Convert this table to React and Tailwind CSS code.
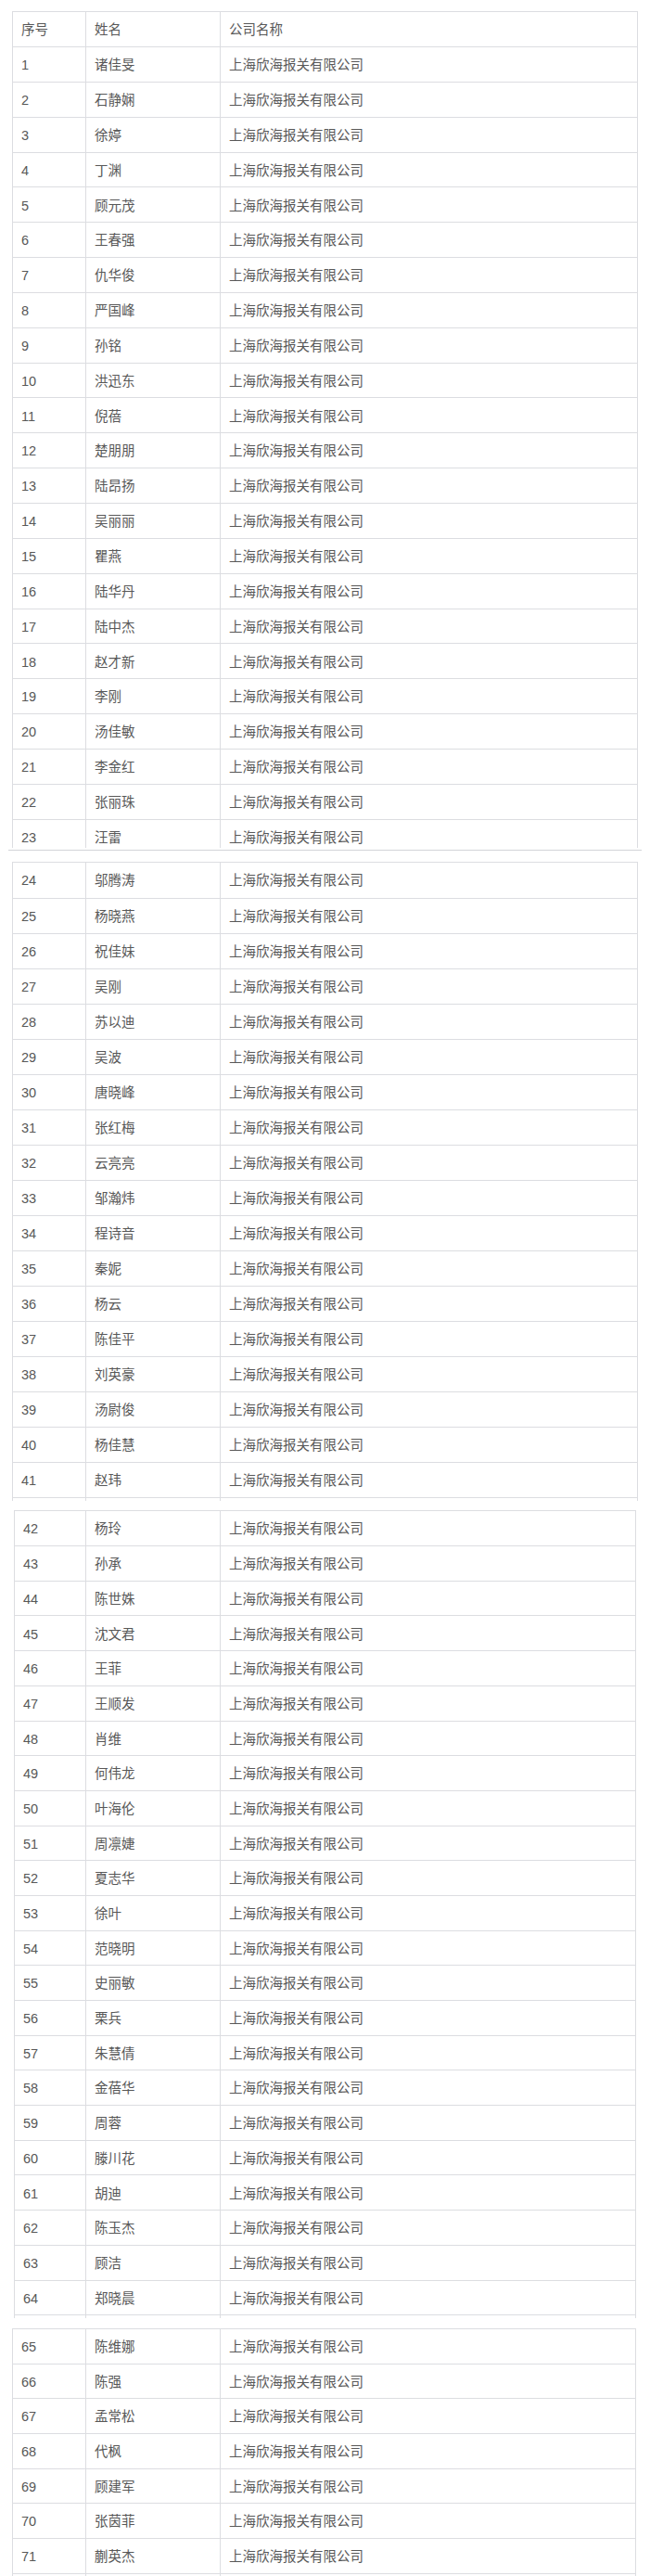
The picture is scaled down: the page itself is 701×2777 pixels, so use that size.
const COMPANY = "上海欣海报关有限公司";

const NAMES = [
  "诸佳旻", "石静娴", "徐婷", "丁渊", "顾元茂", "王春强", "仇华俊", "严国峰", "孙铭", "洪迅东",
  "倪蓓", "楚朋朋", "陆昂扬", "吴丽丽", "瞿燕", "陆华丹", "陆中杰", "赵才新", "李刚", "汤佳敏",
  "李金红", "张丽珠", "汪雷", "邬腾涛", "杨晓燕", "祝佳妹", "吴刚", "苏以迪", "吴波", "唐晓峰",
  "张红梅", "云亮亮", "邹瀚炜", "程诗音", "秦妮", "杨云", "陈佳平", "刘英豪", "汤尉俊", "杨佳慧",
  "赵玮", "杨玲", "孙承", "陈世姝", "沈文君", "王菲", "王顺发", "肖维", "何伟龙", "叶海伦",
  "周凛婕", "夏志华", "徐叶", "范晓明", "史丽敏", "栗兵", "朱慧倩", "金蓓华", "周蓉", "滕川花",
  "胡迪", "陈玉杰", "顾洁", "郑晓晨", "陈维娜", "陈强", "孟常松", "代枫", "顾建军", "张茵菲",
  "蒯英杰",
];

const people = (from, to) =>
  NAMES.slice(from - 1, to).map((name, i) => ({ no: from + i, name }));

function Row({ no, name, company, height, col1 }) {
  return (
    <div className={`flex border-b border-[#dcdde1] ${height}`}>
      <div className={`${col1} shrink-0 border-r border-[#dcdde1] pl-[9px] pt-[2px] flex items-center`}>
        {no}
      </div>
      <div className="w-[145px] shrink-0 border-r border-[#dcdde1] pl-[9px] pt-[2px] flex items-center">
        {name}
      </div>
      <div className="flex-1 pl-[9px] pt-[2px] flex items-center">{company}</div>
    </div>
  );
}

export default function App() {
  return (
    <div
      className="h-[2777px] overflow-hidden bg-white pt-[12px] text-[14.5px] leading-none text-[#585858]"
      style={{ fontFamily: '"Liberation Sans", "Noto Sans CJK SC", sans-serif' }}
    >
      {/* 第一段 1-23 */}
      <div className="ml-[13px] w-[675px] border-t border-l border-r border-[#dcdde1]">
        <Row no="序号" name="姓名" company="公司名称" height="h-[38px]" col1="w-[79px]" />
        {people(1, 22).map((p) => (
          <Row key={p.no} {...p} company={COMPANY} height="h-[37.85px]" col1="w-[79px]" />
        ))}
        <div className="h-[30px] overflow-hidden">
          <Row no={23} name={NAMES[22]} company={COMPANY} height="h-[37.85px]" col1="w-[79px]" />
        </div>
      </div>
      <div className="mt-[2px] ml-[9px] w-[683px] h-px bg-[#d3d4d8]" />

      {/* 第二段 24-41 */}
      <div className="mt-[12px] ml-[13px] w-[675px] border-t border-l border-r border-[#dcdde1]">
        {people(24, 41).map((p, i) => (
          <Row
            key={p.no}
            {...p}
            company={COMPANY}
            height={i === 0 ? "h-[39px]" : "h-[38px]"}
            col1="w-[79px]"
          />
        ))}
        <div className="h-[3px] overflow-hidden">
          <Row no="" name="" company="" height="h-[38px]" col1="w-[79px]" />
        </div>
      </div>

      {/* 第三段 42-64 */}
      <div className="mt-[10.5px] ml-[15px] w-[671px] border-t border-l border-r border-[#dcdde1]">
        {people(42, 64).map((p, i) => (
          <Row
            key={p.no}
            {...p}
            company={COMPANY}
            height={i === 0 ? "h-[38px]" : "h-[37.7px]"}
            col1="w-[77px]"
          />
        ))}
        <div className="h-[3px] overflow-hidden">
          <Row no="" name="" company="" height="h-[38px]" col1="w-[77px]" />
        </div>
      </div>

      {/* 第四段 65-71 */}
      <div className="mt-[10.4px] ml-[13px] w-[673px] border-t border-l border-r border-[#dcdde1]">
        {people(65, 71).map((p, i) => (
          <Row
            key={p.no}
            {...p}
            company={COMPANY}
            height={i === 0 ? "h-[38px]" : "h-[37.7px]"}
            col1="w-[79px]"
          />
        ))}
        <div className="h-[10px] overflow-hidden">
          <Row no="" name="" company="" height="h-[38px]" col1="w-[79px]" />
        </div>
      </div>
    </div>
  );
}
